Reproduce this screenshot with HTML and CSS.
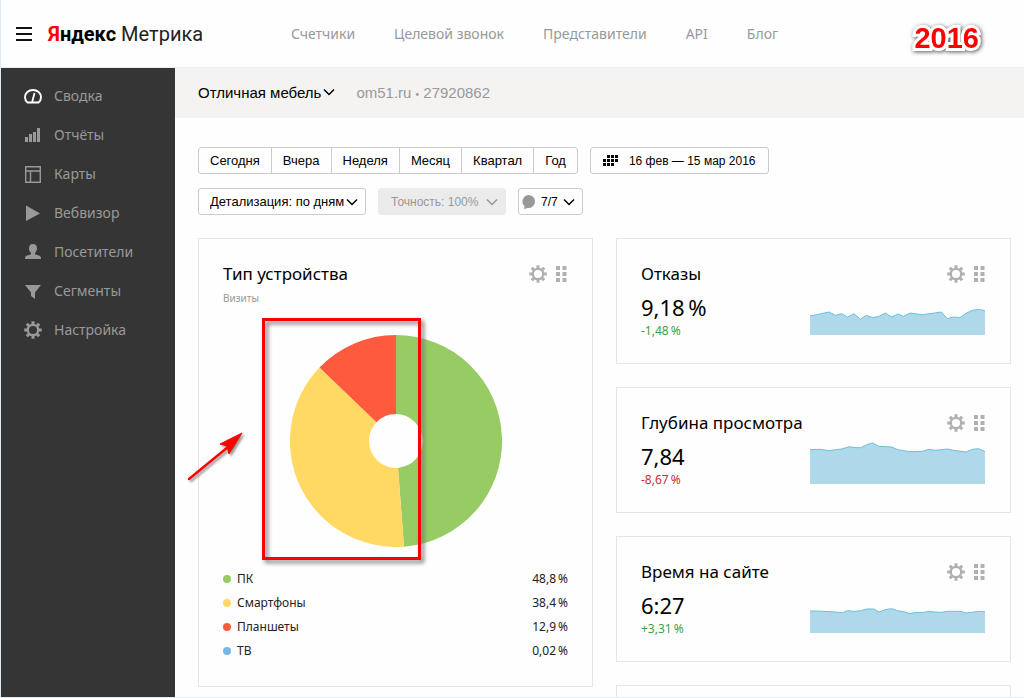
FILE: index.html
```html
<!DOCTYPE html>
<html lang="ru">
<head>
<meta charset="utf-8">
<title>Яндекс Метрика</title>
<link rel="stylesheet" href="styles.css">
</head>
<body>
<svg class="defs" aria-hidden="true">
  <symbol id="gear" viewBox="0 0 18 18">
    <circle cx="9" cy="9" r="5.200" fill="none" stroke="currentColor" stroke-width="2.300"/>
    <path d="M9 .2v3M9 14.800v3M.2 9h3M14.800 9h3M2.800 2.800l2.100 2.100M13.100 13.100l2.100 2.100M2.800 15.200l2.100-2.100M13.100 4.900l2.100-2.100" stroke="currentColor" stroke-width="3"/>
  </symbol>
  <symbol id="grip" viewBox="0 0 11 16">
    <path d="M0 0h4v4H0zM6.500 0h4v4h-4zM0 6h4v4H0zM6.500 6h4v4h-4zM0 12h4v4H0zM6.500 12h4v4h-4z" fill="currentColor"/>
  </symbol>
  <symbol id="chevron" viewBox="0 0 12 8">
    <path d="M1 1.500L6 6.500L11 1.500" fill="none" stroke="currentColor" stroke-width="1.500"/>
  </symbol>
</svg>
<div class="app">
  <header class="header">
    <div class="brand">
      <button class="menu" type="button" aria-label="Меню"><span></span><span></span><span></span></button>
      <a class="logo" href="#"><b><i>Я</i>ндекс</b> Метрика</a>
    </div>
    <nav class="topnav">
      <a href="#">Счетчики</a><a href="#">Целевой звонок</a><a href="#">Представители</a><a href="#">API</a><a href="#">Блог</a>
    </nav>
    <strong class="year">2016</strong>
  </header>
  <div class="body">
    <nav class="sidebar">
      <a class="active" href="#"><svg viewBox="0 0 18 18"><path d="M3.500 15.500C2 14.200 1 12.300 1 10.200 1 6 4.600 3 9 3s8 3 8 7.200c0 2.100-1 4-2.500 5.300z" fill="none" stroke="currentColor" stroke-width="1.900"/><path d="M8.200 15L10.500 6" stroke="currentColor" stroke-width="1.800"/></svg>Сводка</a>
      <a href="#"><svg viewBox="0 0 18 18"><path d="M1 11h3v5H1zM5 8h3v8H5zM9 6h3v10H9zM13 2h3v14h-3z" fill="currentColor"/></svg>Отчёты</a>
      <a href="#"><svg viewBox="0 0 18 18"><path d="M1.700 1.700h14.600v15.600H1.700zM1.700 6h14.600M6.500 6v11.300" fill="none" stroke="currentColor" stroke-width="1.400"/></svg>Карты</a>
      <a href="#"><svg viewBox="0 0 18 18"><path d="M2 1.500L16 9.500L2 17z" fill="currentColor"/></svg>Вебвизор</a>
      <a href="#"><svg viewBox="0 0 18 18"><path d="M9 1c2.800 0 4 1.800 4 4.200 0 2-.8 3.700-2 4.800v1.200l4.500 1.500c1 .4 1.500 1.500 1.500 3.300H1c0-1.800.5-2.900 1.500-3.300L7 11.200V10C5.800 8.900 5 7.200 5 5.200 5 2.800 6.200 1 9 1z" fill="currentColor"/></svg>Посетители</a>
      <a href="#"><svg viewBox="0 0 18 18"><path d="M1 3h16l-6 7.500V17l-4-3v-3.500z" fill="currentColor"/></svg>Сегменты</a>
      <a href="#"><svg><use href="#gear"/></svg>Настройка</a>
    </nav>
    <main class="main">
      <div class="counter">
        <button class="counter-name" type="button">Отличная мебель<svg class="chev"><use href="#chevron"/></svg></button>
        <span class="counter-id">om51.ru <small>•</small> 27920862</span>
      </div>
      <div class="toolbar">
        <div class="row">
          <div class="segments">
            <button type="button">Сегодня</button><button type="button">Вчера</button><button type="button">Неделя</button><button type="button">Месяц</button><button type="button">Квартал</button><button type="button">Год</button>
          </div>
          <button class="control" type="button"><svg class="cal" viewBox="0 0 15 11"><path d="M4 0h3v3H4zM8 0h3v3H8zM12 0h3v3h-3zM0 4h3v3H0zM4 4h3v3H4zM8 4h3v3H8zM12 4h3v3h-3zM0 8h3v3H0zM4 8h3v3H4zM8 8h3v3H8z"/></svg>16 фев — 15 мар 2016</button>
        </div>
        <div class="row">
          <span class="picker"><select aria-label="Детализация"><option>Детализация: по дням</option></select><svg class="chev"><use href="#chevron"/></svg></span>
          <span class="picker off"><select aria-label="Точность" disabled><option>Точность: 100%</option></select><svg class="chev"><use href="#chevron"/></svg></span>
          <button class="control notes" type="button"><svg class="bubble" viewBox="0 0 14 14"><path d="M7 0a6.500 6.500 0 1 1-1 13L2 14l.5-2.800A6.500 6.500 0 0 1 7 0z" fill="#999"/></svg>7/7 <svg class="chev"><use href="#chevron"/></svg></button>
        </div>
      </div>
      <div class="cards">
        <section class="card device">
          <header class="card-head"><h2>Тип устройства</h2><button type="button" aria-label="Настроить"><svg class="gear"><use href="#gear"/></svg></button><button type="button" aria-label="Переместить"><svg class="grip"><use href="#grip"/></svg></button></header>
          <p class="subtitle">Визиты</p>
          <div class="pie">
            <svg viewBox="-106 -106 212 212">
              <path fill="#97cc64" d="M0-106A106 106 0 0 1 8 105.700L2 26.900A27 27 0 0 0 0-27z"/>
              <path fill="#ffd963" d="M8 105.700A106 106 0 0 1-76.500-73.400L-19.500-18.700A27 27 0 0 0 2 26.900z"/>
              <path fill="#fd5a3e" d="M-76.500-73.400A106 106 0 0 1 0-106V-27A27 27 0 0 0-19.500-18.700z"/>
            </svg>
            <div class="frame"></div>
          </div>
          <ul class="legend">
            <li><i class="dot green"></i>ПК<span>48,8&#8201;%</span></li>
            <li><i class="dot yellow"></i>Смартфоны<span>38,4&#8201;%</span></li>
            <li><i class="dot red"></i>Планшеты<span>12,9&#8201;%</span></li>
            <li><i class="dot blue"></i>ТВ<span>0,02&#8201;%</span></li>
          </ul>
          <svg class="arrow" viewBox="0 0 60 52"><path d="M3 48L42 16" stroke="#f00" stroke-width="2.500" stroke-linecap="round"/><path d="M56 2L34 13l7 2 2 8z" fill="#f00" stroke="#f00"/></svg>
        </section>
        <div class="column">
          <section class="card">
            <header class="card-head"><h2>Отказы</h2><button type="button" aria-label="Настроить"><svg class="gear"><use href="#gear"/></svg></button><button type="button" aria-label="Переместить"><svg class="grip"><use href="#grip"/></svg></button></header>
            <div class="metric">
              <div><div class="value">9,18&#8201;%</div><div class="delta up">-1,48&#8201;%</div></div>
              <svg class="spark" viewBox="0 0 525 126"><path class="area" d="M0 69L30 63 57 57 76 67 95 62 113 72 132 62 151 79 169 67 188 74 207 70 226 60 245 72 263 63 281 70 300 60 337 65 375 60 394 57 412 77 431 72 450 74 468 61 487 52 506 49 525 53V126H0z"/><path class="line" d="M0 69L30 63 57 57 76 67 95 62 113 72 132 62 151 79 169 67 188 74 207 70 226 60 245 72 263 63 281 70 300 60 337 65 375 60 394 57 412 77 431 72 450 74 468 61 487 52 506 49 525 53"/></svg>
            </div>
          </section>
          <section class="card">
            <header class="card-head"><h2>Глубина просмотра</h2><button type="button" aria-label="Настроить"><svg class="gear"><use href="#gear"/></svg></button><button type="button" aria-label="Переместить"><svg class="grip"><use href="#grip"/></svg></button></header>
            <div class="metric">
              <div><div class="value">7,84</div><div class="delta down">-8,67&#8201;%</div></div>
              <svg class="spark" viewBox="0 0 525 126"><path class="area" d="M0 23L30 22 57 26 76 23 95 21 118 14 135 17 152 17 170 8 187 3 207 13 245 15 263 23 300 29 337 28 357 22 375 25 412 21 431 25 468 30 487 22 506 20 525 29V126H0z"/><path class="line" d="M0 23L30 22 57 26 76 23 95 21 118 14 135 17 152 17 170 8 187 3 207 13 245 15 263 23 300 29 337 28 357 22 375 25 412 21 431 25 468 30 487 22 506 20 525 29"/></svg>
            </div>
          </section>
          <section class="card">
            <header class="card-head"><h2>Время на сайте</h2><button type="button" aria-label="Настроить"><svg class="gear"><use href="#gear"/></svg></button><button type="button" aria-label="Переместить"><svg class="grip"><use href="#grip"/></svg></button></header>
            <div class="metric">
              <div><div class="value">6:27</div><div class="delta up">+3,31&#8201;%</div></div>
              <svg class="spark" viewBox="0 0 525 126"><path class="area" d="M0 60L20 60 76 63 97 65 113 59 132 61 152 59 170 54 192 54 207 63 225 56 245 53 263 59 281 62 300 68 318 64 337 65 357 61 375 63 394 64 412 61 450 61 468 66 487 64 506 61 525 62V126H0z"/><path class="line" d="M0 60L20 60 76 63 97 65 113 59 132 61 152 59 170 54 192 54 207 63 225 56 245 53 263 59 281 62 300 68 318 64 337 65 357 61 375 63 394 64 412 61 450 61 468 66 487 64 506 61 525 62"/></svg>
            </div>
          </section>
          <section class="card"></section>
        </div>
      </div>
    </main>
  </div>
</div>
</body>
</html>
```
FILE: styles.css
```css
* { box-sizing: border-box; }
body { margin: 0; background: #fefefe; color: #000; font-family: "Noto Sans", "Open Sans", sans-serif; }
a { color: inherit; text-decoration: none; }
button { margin: 0; padding: 0; border: 0; background: none; color: inherit; font: inherit; cursor: pointer; }
svg { flex: none; }
.defs { display: none; }

.app { height: 100vh; display: flex; flex-direction: column; border-left: 1px solid #dfe8f4; border-bottom: 1px solid #e9eef6; overflow: hidden; }
.header { flex: none; height: 67px; display: flex; align-items: center; padding-right: 45px; }
.brand { width: 290px; display: flex; align-items: center; gap: 16px; padding-left: 15px; }
.menu { width: 16px; display: grid; gap: 4px; }
.menu span { height: 2px; background: #111; }
.logo { font: 20px Roboto, "Noto Sans", sans-serif; color: #222; white-space: nowrap; }
.logo i { color: #f00; font-style: normal; }
.logo b { color: #000; }
.topnav { display: flex; gap: 39px; color: #999; font-size: 14px; white-space: nowrap; }
.year { margin: 9px 0 0 auto; color: #f00; font: bold 29px "Liberation Sans", sans-serif; -webkit-text-stroke: 6px #fff; paint-order: stroke fill; filter: drop-shadow(1px 1px 2px #555); }

.body { flex: 1; min-height: 0; display: flex; border-top: 1px solid #eee; }
.sidebar { flex: none; width: 174px; padding-top: 8px; background: #353535; color: #999; font-size: 14px; }
.sidebar a { height: 39px; display: flex; align-items: center; gap: 12px; padding-left: 23px; }
.sidebar svg { width: 18px; height: 18px; }
.active svg { color: #fff; }

.main { flex: 1; min-width: 0; overflow-y: auto; scrollbar-width: none; }
.counter { height: 50px; display: flex; align-items: center; gap: 21px; padding: 0 23px 2px; background: #f4f3f2; font: 15px "Liberation Sans", sans-serif; }
.counter-name { display: flex; align-items: center; gap: 2px; }
.counter-id { color: #999; }
.counter-id small { font-size: 10px; }
.chev { width: 12px; height: 8px; }

.toolbar { display: grid; gap: 14px; padding: 29px 13px 23px 23px; font: 13px "Liberation Sans", sans-serif; }
.row { display: flex; gap: 12px; }
.segments { display: flex; border: 1px solid #ccc; border-radius: 3px; }
.segments button { height: 25px; padding: 0 11px; }
.segments button + button { border-left: 1px solid #ccc; }
.control { height: 27px; display: flex; align-items: center; gap: 11px; padding: 0 12px; border: 1px solid #ccc; border-radius: 3px; font-size: 12px; }
.cal { width: 15px; height: 11px; }
.notes { gap: 5px; padding: 0 7px 0 3px; }
.bubble { width: 14px; height: 14px; }
.picker { display: grid; align-items: center; }
.picker select, .picker .chev { grid-area: 1 / 1; }
.picker .chev { justify-self: end; margin-right: 8px; pointer-events: none; }
.picker select { appearance: none; height: 27px; margin: 0; padding: 0 20px 0 11px; border: 1px solid #ccc; border-radius: 3px; background: #fff; color: #000; font: inherit; }
.off { color: #999; }
.off select { padding: 0 26px 0 12px; border-color: #ebebeb; background: #ebebeb; color: #999; font-size: 12px; opacity: 1; }

.cards { display: grid; grid-template-columns: 1fr 1fr; align-items: start; gap: 23px; padding: 0 13px 23px 23px; }
.column { display: grid; gap: 23px; }
.card { min-height: 126px; padding: 23px 24px 20px; border: 1px solid #e6e6e6; }
.card-head { height: 24px; display: flex; align-items: center; padding-right: 1px; color: #b0b0b0; }
.card-head h2 { flex: 1; margin: 0; color: #000; font-size: 17px; font-weight: 400; line-height: 24px; }
.card-head button { display: flex; margin-left: 9px; }
.gear { width: 18px; height: 18px; }
.grip { width: 11px; height: 16px; }

.device { position: relative; padding-bottom: 23px; }
.subtitle { margin: 4px 0 29px; color: #999; font-size: 10px; line-height: 16px; }
.pie { position: relative; width: 212px; margin: 0 auto; }
.pie svg { display: block; width: 212px; height: 212px; }
.frame { position: absolute; left: -28px; top: -17px; width: 159px; height: 242px; border: 3px solid #f00; filter: drop-shadow(3px 3px 2px #777); }
.arrow { position: absolute; left: -13px; top: 192px; width: 60px; height: 52px; filter: drop-shadow(2px 2px 1px #999); }
.legend { margin: 20px 0 0; padding: 0; list-style: none; font-size: 12px; line-height: 24px; color: #222; }
.legend li { display: flex; align-items: center; gap: 6px; }
.legend span { margin-left: auto; }
.dot { width: 8px; height: 8px; border-radius: 50%; }
.green { background: #97cc64; }
.yellow { background: #ffd963; }
.red { background: #fd5a3e; }
.blue { background: #77b6e7; }

.metric { display: flex; justify-content: space-between; align-items: flex-start; margin-top: 6px; padding-right: 1px; }
.value { font-size: 22px; line-height: 30px; }
.delta { font-size: 12px; line-height: 18px; }
.up { color: #3c9f4a; }
.down { color: #d02a3a; }
.spark { width: 175px; height: 42px; margin-top: 1px; }
.area { fill: #aed9ea; }
.line { fill: none; stroke: #6fc0d8; stroke-width: 3; }
```
